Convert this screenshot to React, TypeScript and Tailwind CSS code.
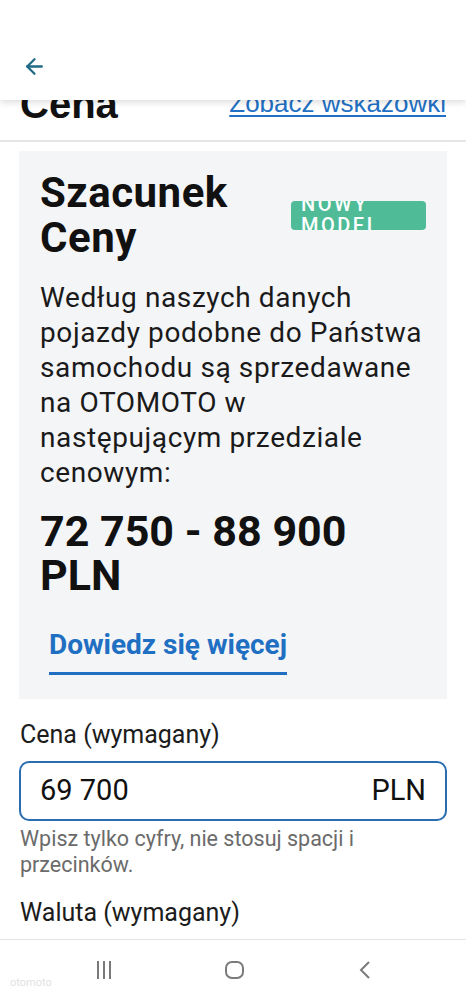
import { ArrowLeft } from 'lucide-react'

const font = { fontFamily: 'Roboto, "Noto Sans", sans-serif' }
const arial = { fontFamily: '"Liberation Sans", Arial, sans-serif' }

export default function App() {
  return (
    <div className="h-[999px] w-[466px] flex flex-col overflow-hidden bg-white text-[#111]" style={font}>
      {/* top bar */}
      <header className="relative z-10 h-[100px] shrink-0 bg-white shadow-[0_3px_6px_rgba(0,0,0,0.12)]">
        <div className="pl-[22px] pt-[54px]">
          <ArrowLeft className="w-[25px] h-[25px] text-[#1f6a85]" strokeWidth={2.2} />
        </div>
      </header>

      <main className="flex-1 overflow-hidden -mt-[24px]">
        {/* heading row, scrolled under the top bar */}
        <div className="flex justify-between px-[20px] h-[66px] border-b-2 border-[#e6e6e6]">
          <h1 className="self-end pb-[16px] text-[40px] font-bold leading-none" style={arial}>
            Cena
          </h1>
          <a className="self-end pb-[24px] text-[26px] leading-none text-[#2270c4] underline underline-offset-[3px]" style={arial}>
            Zobacz wskazówki
          </a>
        </div>

        {/* estimate card */}
        <section className="mx-[19px] mt-[9px] bg-[#f4f5f7] px-[21px] pt-[19px] pb-[24px]">
          <div className="flex items-center gap-3">
            <h2 className="flex-1 text-[42px] font-bold leading-[45px] tracking-[0.5px]">
              Szacunek
              <br />
              Ceny
            </h2>
            <span className="flex items-center h-[29px] w-[135px] overflow-hidden rounded-[4px] bg-[#4fbb97] pl-[10px] text-[20px] leading-[21px] tracking-[2.5px] text-white font-medium">
              <span className="w-[100px]">NOWY MODEL</span>
            </span>
          </div>

          <p className="mt-[20px] whitespace-nowrap text-[28px] leading-[35px] tracking-[0.6px] text-[#1a1a1a]">
            Według naszych danych
            <br />
            pojazdy podobne do Państwa
            <br />
            samochodu są sprzedawane
            <br />
            na OTOMOTO w
            <br />
            następującym przedziale
            <br />
            cenowym:
          </p>

          <p className="mt-[19px] text-[43px] font-bold leading-[44px]">
            72 750 - 88 900
            <br />
            PLN
          </p>

          <a className="mt-[30px] ml-[9px] inline-block border-b-[3px] border-[#1f6fc2] pb-[9px] text-[28px] font-bold leading-[36px] text-[#1f6fc2]">
            Dowiedz się więcej
          </a>
        </section>

        {/* price field */}
        <div className="px-[19px]">
          <label className="mt-[21px] block pl-[1px] text-[25px] leading-[30px] text-[#1c1c1c]">Cena (wymagany)</label>
          <div className="mt-[11px] flex h-[60px] items-center justify-between rounded-[10px] border-2 border-[#2b6db1] pl-[19px] pr-[19px] text-[29px]">
            <span>69 700</span>
            <span>PLN</span>
          </div>
          <p className="mt-[5px] pl-[1px] text-[21.5px] leading-[26px] text-[#6b6b6b]">
            Wpisz tylko cyfry, nie stosuj spacji i
            <br />
            przecinków.
          </p>
          <label className="mt-[20px] block pl-[1px] text-[25px] leading-[30px] text-[#1c1c1c]">Waluta (wymagany)</label>
        </div>
      </main>

      {/* system nav bar */}
      <nav className="relative h-[60px] shrink-0 border-t border-[#e4e4e4] bg-white flex items-center pl-[97px] gap-[114px]">
        <div className="flex gap-[4px] h-[18px]">
          <span className="w-[2px] bg-[#7a7a7a]" />
          <span className="w-[2px] bg-[#7a7a7a]" />
          <span className="w-[2px] bg-[#7a7a7a]" />
        </div>
        <span className="h-[18px] w-[19px] rounded-[7px] border-2 border-[#7a7a7a]" />
        <svg width="14" height="20" viewBox="0 0 14 20" fill="none" stroke="#7a7a7a" strokeWidth="2">
          <path d="M11 2 L3 10 L11 18" />
        </svg>
        <span className="absolute left-[10px] bottom-[8px] text-[11px] text-[#e2e2e2]">otomoto</span>
      </nav>
    </div>
  )
}
